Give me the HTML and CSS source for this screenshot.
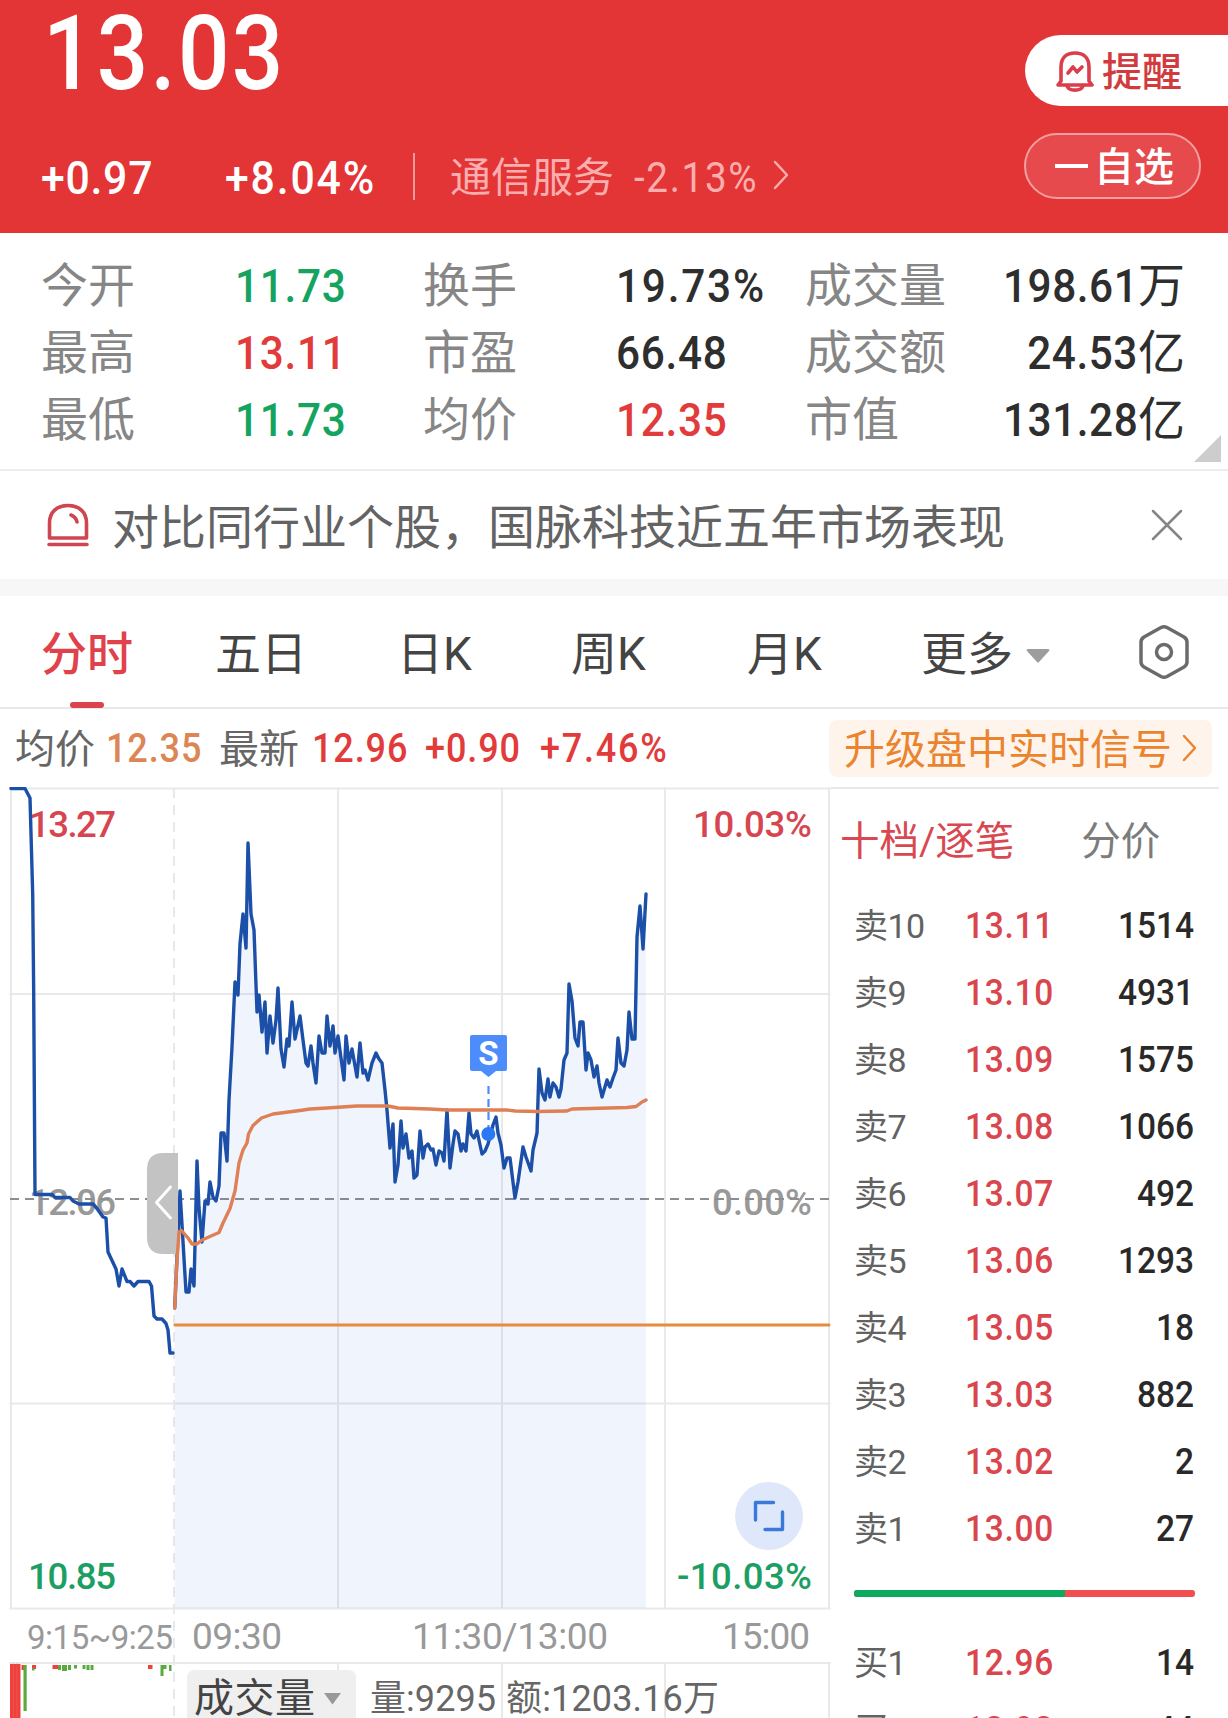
FILE: index.html
```html
<!DOCTYPE html>
<html lang="zh-CN">
<head>
  <meta charset="UTF-8">
  <meta name="viewport" content="width=device-width, initial-scale=1.0">
  <title>国脉科技</title>
  <link rel="stylesheet" href="styles.css">
</head>
<body>
  <header class="header">
    <div class="quote">
      <div class="price">13.03</div>
      <div class="change-row">
        <span class="change">+0.97</span>
        <span class="change percent">+8.04%</span>
        <span class="divider"></span>
        <span class="sector">通信服务</span>
        <span class="sector-change">-2.13%</span>
        <svg class="sector-arrow" width="17" height="30" viewBox="0 0 17 30"><path d="M2 2 L14 15 L2 28"/></svg>
      </div>
    </div>
    <div class="actions">
      <button class="btn remind">
        <svg width="38" height="42" viewBox="0 0 38 42">
          <path d="M5 31 V17 C5 7 11 3 19 3 C27 3 33 7 33 17 V31 L36 35 H2 L5 31"/>
          <path d="M11 36 C13 41.500 25 41.500 27 36"/>
          <path d="M12 23 L17 17 L21 22 L26 17"/>
        </svg>
        <span>提醒</span>
      </button>
      <button class="btn watch"><i class="minus"></i><span>自选</span></button>
    </div>
  </header>

  <section class="stats">
    <span class="label">今开</span><span class="num green">11.73</span>
    <span class="label">换手</span><span class="num wide">19.73%</span>
    <span class="label">成交量</span><span class="right"><b>198.61</b>万</span>
    <span class="label">最高</span><span class="num red">13.11</span>
    <span class="label">市盈</span><span class="num">66.48</span>
    <span class="label">成交额</span><span class="right"><b>24.53</b>亿</span>
    <span class="label">最低</span><span class="num green">11.73</span>
    <span class="label">均价</span><span class="num red">12.35</span>
    <span class="label">市值</span><span class="right"><b>131.28</b>亿</span>
    <i class="corner"></i>
  </section>

  <section class="notice">
    <svg width="42" height="44" viewBox="0 0 42 44">
      <path d="M2.500 35 V20 C2.500 9 10 2.500 21 2.500 C32 2.500 39.500 9 39.500 20 V35 Z M2 41.500 H40 M24 12 Q29 14 30 19"/>
    </svg>
    <span class="notice-text">对比同行业个股，国脉科技近五年市场表现</span>
    <svg class="close" width="32" height="32" viewBox="0 0 32 32"><path d="M2 2 L30 30 M30 2 L2 30"/></svg>
  </section>

  <nav class="tabs">
    <span class="tab active">分时</span>
    <span class="tab">五日</span>
    <span class="tab">日K</span>
    <span class="tab">周K</span>
    <span class="tab">月K</span>
    <span class="tab more">更多
      <svg width="24" height="16" viewBox="0 0 24 16"><path d="M2 1 H22 Q24 1 23 3 L13 14 Q12 15 11 14 L1 3 Q0 1 2 1Z"/></svg>
    </span>
    <svg class="settings" width="52" height="56" viewBox="0 0 52 56">
      <path d="M23 3.500 Q26 2 29 3.500 L46 13 Q49 15 49 18 V38 Q49 41 46 43 L29 52.500 Q26 54 23 52.500 L6 43 Q3 41 3 38 V18 Q3 15 6 13 Z"/>
      <circle cx="26" cy="28" r="7.500"/>
    </svg>
  </nav>

  <div class="info">
    <span class="info-label">均价</span>
    <span class="info-num orange avg">12.35</span>
    <span class="info-label">最新</span>
    <span class="info-num red last">12.96</span>
    <span class="info-num red diff">+0.90</span>
    <span class="info-num red rate">+7.46%</span>
    <a class="upgrade"><span>升级盘中实时信号</span>
      <svg width="16" height="28" viewBox="0 0 16 28"><path d="M2 2 L13 14 L2 26"/></svg>
    </a>
  </div>

  <main class="main">
    <svg class="chart" width="831" height="931" viewBox="0 787 831 931">
      <!-- grid -->
      <g class="grid">
        <path d="M11 788 V1608 M338 788 V1608 M502 788 V1608 M665 788 V1608 M829 788 V1608"/>
        <path d="M10 788.500 H831 M10 994 H830 M10 1403.500 H830 M10 1608.500 H830 M10 1663 H830"/>
        <path d="M338 1663 V1718 M502 1663 V1718 M665 1663 V1718 M829 1663 V1718"/>
        <path class="dash" d="M174 788 V1718"/>
      </g>

      <g class="scale">
        <text class="up" x="29" y="837" textLength="87">13.27</text>
        <text class="up" x="693" y="837" textLength="119">10.03%</text>
        <text class="flat" x="29" y="1215" textLength="87">12.06</text>
        <text class="flat" x="712" y="1215" textLength="100">0.00%</text>
        <text class="down" x="28" y="1589" textLength="88">10.85</text>
        <text class="down" x="677" y="1589" textLength="135">-10.03%</text>
      </g>

      <path class="zero" d="M10 1199 H830"/>

      <path class="area" d="M174.700 1308 L180 1191 186 1292 189 1292 191 1269 194 1286 197 1161 199 1208 202 1242 205 1201 208 1204 210 1182 213 1197 216 1201 219 1186 221 1133 224 1133 227 1161 229 1100 232 1047 235 982 238 995 240 944 243 914 246 948 248 843 251 914 254 930 257 1012 259 995 262 1032 265 1002 267 1053 270 1016 273 1043 276 1020 278 988 281 1049 284 1067 287 1039 289 1046 292 1002 295 1039 300 1016 303 1040 306 1063 308 1066 311 1046 313 1063 316 1083 319 1036 322 1053 325 1053 327 1016 330 1046 333 1026 335 1053 338 1036 344 1080 346 1036 349 1063 352 1049 357 1077 360 1043 363 1073 365 1070 368 1080 372 1063 376 1053 379 1059 382 1063 385 1090 387 1110 390 1148 393 1124 395 1182 398 1165 401 1121 403 1148 406 1134 409 1158 412 1151 414 1178 417 1175 420 1131 423 1158 425 1147 428 1144 431 1150 433 1149 436 1165 439 1151 442 1153 444 1161 447 1110 450 1168 453 1144 455 1131 458 1134 461 1151 463 1144 466 1151 469 1113 471 1134 474 1138 477 1131 482 1154 485 1151 488 1144 493 1125 496 1117 498 1133 501 1145 504 1168 507 1158 510 1158 515 1198 518 1182 523 1147 526 1157 531 1171 533 1150 537 1133 538 1100 539 1069 542 1093 545 1100 548 1079 550 1097 553 1083 556 1087 559 1097 561 1089 564 1060 567 1053 569 984 572 1001 575 1038 578 1046 580 1022 583 1022 586 1070 588 1053 591 1060 594 1077 597 1066 599 1083 602 1097 607 1080 610 1087 613 1078 616 1070 618 1038 621 1063 624 1066 627 1050 629 1012 632 1039 635 1039 637 937 640 906 643 949 646 893 V1608 H174.700 Z"/>

      <!-- call auction 9:15 - 9:25 -->
      <polyline class="line" points="11,788.500 25,788.500 30,798 32.700,894 33.700,994 35,1194.500 52,1194.500 55,1197.500 70,1197.500 73,1201 79,1204 93,1204 97,1208.500 103,1217 106,1218 108,1252 116,1269 119,1286 122,1269 127,1281.500 130,1281.500 134,1286 138,1281.500 149,1281.500 151.500,1286 154,1316 157,1319 162,1319 166,1323.500 168,1330 170,1353 173,1353"/>
      <polyline class="line" points="174.700,1308 180,1191 186,1292 189,1292 191,1269 194,1286 197,1161 199,1208 202,1242 205,1201 208,1204 210,1182 213,1197 216,1201 219,1186 221,1133 224,1133 227,1161 229,1100 232,1047 235,982 238,995 240,944 243,914 246,948 248,843 251,914 254,930 257,1012 259,995 262,1032 265,1002 267,1053 270,1016 273,1043 276,1020 278,988 281,1049 284,1067 287,1039 289,1046 292,1002 295,1039 300,1016 303,1040 306,1063 308,1066 311,1046 313,1063 316,1083 319,1036 322,1053 325,1053 327,1016 330,1046 333,1026 335,1053 338,1036 344,1080 346,1036 349,1063 352,1049 357,1077 360,1043 363,1073 365,1070 368,1080 372,1063 376,1053 379,1059 382,1063 385,1090 387,1110 390,1148 393,1124 395,1182 398,1165 401,1121 403,1148 406,1134 409,1158 412,1151 414,1178 417,1175 420,1131 423,1158 425,1147 428,1144 431,1150 433,1149 436,1165 439,1151 442,1153 444,1161 447,1110 450,1168 453,1144 455,1131 458,1134 461,1151 463,1144 466,1151 469,1113 471,1134 474,1138 477,1131 482,1154 485,1151 488,1144 493,1125 496,1117 498,1133 501,1145 504,1168 507,1158 510,1158 515,1198 518,1182 523,1147 526,1157 531,1171 533,1150 537,1133 538,1100 539,1069 542,1093 545,1100 548,1079 550,1097 553,1083 556,1087 559,1097 561,1089 564,1060 567,1053 569,984 572,1001 575,1038 578,1046 580,1022 583,1022 586,1070 588,1053 591,1060 594,1077 597,1066 599,1083 602,1097 607,1080 610,1087 613,1078 616,1070 618,1038 621,1063 624,1066 627,1050 629,1012 632,1039 635,1039 637,937 640,906 643,949 646,894"/>

      <!-- drawer handle -->
      <path class="handle" d="M178 1153 H163 Q147 1153 147 1170 V1237 Q147 1254 163 1254 H178 Z"/>
      <path class="handle-arrow" d="M170.500 1187 L156.500 1202.500 L170.500 1218"/>

      <polyline class="avg-line" points="174.700,1308 177,1260 179,1232 181.500,1230.500 188,1238 192,1244 197,1244 202,1240 219,1232.500 223,1223 230,1208.500 235,1191 239,1163 243,1150 247,1143 248.500,1134 253,1125.500 261.500,1118 273,1114 300,1110.500 310,1109 327,1108 357,1106 388,1106 398,1108 430,1109 447,1110 507,1110 515,1111 537,1111.500 567,1111 572,1109 627,1107.500 636,1106.500 642,1102 646,1100"/>
      <path class="cost-line" d="M175 1325 H829"/>

      <!-- sell marker -->
      <path class="marker-dash" d="M488.500 1086 V1128"/>
      <circle class="marker-dot" cx="488.300" cy="1134" r="7"/>
      <path class="marker-box" d="M472 1035 H505 Q507 1035 507 1037 V1069 Q507 1071 505 1071 H496 L488.500 1077 L481 1071 H472 Q470 1071 470 1069 V1037 Q470 1035 472 1035Z"/>
      <text class="marker-text" x="488.500" y="1064.500">S</text>

      <circle class="full-bg" cx="769" cy="1516" r="34"/>
      <path class="full-icon" d="M755.500 1520 V1502.500 H773.500 M782.500 1512 V1529.500 H765"/>

      <g class="times">
        <text class="small" x="27" y="1649" textLength="146">9:15~9:25</text>
        <text x="192" y="1649" textLength="90">09:30</text>
        <text x="412" y="1649" textLength="196">11:30/13:00</text>
        <text x="722" y="1649" textLength="88">15:00</text>
      </g>

      <!-- volume bars -->
      <path class="vol-red" d="M10 1664 H20.500 V1718 H10Z M21.500 1665 h2.500 v5 h-2.500z M32 1665 h4 v4 h-4z M52.500 1665 h5.500 v4 h-5.500z M148 1665 h4.500 v4 h-4.500z"/>
      <path class="vol-gap" d="M13.300 1664 V1718 M17 1664 V1718"/>
      <path class="vol-green" d="M23.500 1665 h3.200 v46 h-3.200z M32 1668 h2.500 v2.500 h-2.500z M58 1665 h3 v5 h-3z M62 1665 h5 v6 h-5z M68 1665 h3 v5 h-3z M74 1665 h3 v3.500 h-3z M82.500 1665 h3 v4 h-3z M86.500 1665 h3 v5 h-3z M90.500 1665 h3 v5 h-3z M160.500 1665 h3 v11 h-3z M163.500 1665 h3 v4 h-3z M169 1665 h2.500 v6 h-2.500z"/>

      <path class="select-box" d="M187 1718 V1678 Q187 1670 195 1670 H348 Q356 1670 356 1678 V1718Z"/>
      <text class="select-text" x="194" y="1712" textLength="121">成交量</text>
      <path class="select-arrow" d="M324 1693 H341 L332.500 1704.500Z"/>
      <text class="vol-text" x="370" y="1711" textLength="126">量:9295</text>
      <text class="vol-text" x="506" y="1711" textLength="213">额:1203.16万</text>
    </svg>

    <aside class="book">
      <div class="book-tabs"><span class="book-active">十档/逐笔</span><span>分价</span></div>
      <div class="row"><span>卖10</span><b>13.11</b><em>1514</em></div>
      <div class="row"><span>卖9</span><b>13.10</b><em>4931</em></div>
      <div class="row"><span>卖8</span><b>13.09</b><em>1575</em></div>
      <div class="row"><span>卖7</span><b>13.08</b><em>1066</em></div>
      <div class="row"><span>卖6</span><b>13.07</b><em>492</em></div>
      <div class="row"><span>卖5</span><b>13.06</b><em>1293</em></div>
      <div class="row"><span>卖4</span><b>13.05</b><em>18</em></div>
      <div class="row"><span>卖3</span><b>13.03</b><em>882</em></div>
      <div class="row"><span>卖2</span><b>13.02</b><em>2</em></div>
      <div class="row"><span>卖1</span><b>13.00</b><em>27</em></div>
      <div class="ratio"><i style="width: 62%"></i></div>
      <div class="row"><span>买1</span><b>12.96</b><em>14</em></div>
      <div class="row"><span>买2</span><b>12.93</b><em>44</em></div>
    </aside>
  </main>
</body>
</html>
```
FILE: styles.css
```css
* {
  box-sizing: border-box;
}

body {
  margin: 0;
  width: 1228px;
  height: 1718px;
  overflow: hidden;
  background-color: #fff;
  font-family: Roboto, "Noto Sans CJK SC", sans-serif;
  color: #2e2e2e;
}

svg {
  flex: none;
  fill: none;
  stroke-linecap: round;
  stroke-linejoin: round;
}

.red {
  color: #e23b3b;
}

.green {
  color: #14a45f;
}

.orange {
  color: #dc8555;
}

/* header */
.header {
  display: flex;
  justify-content: space-between;
  height: 233px;
  background-color: #e33436;
  color: #fff;
}

.price {
  padding: 2px 0 0 49px;
  height: 143px;
  font-size: 103px;
  font-weight: 500;
  line-height: 103px;
  letter-spacing: 2.5px;
  transform: scaleX(0.88);
  transform-origin: left;
}

.change-row {
  display: flex;
  align-items: center;
  height: 66px;
  padding-left: 41px;
  white-space: nowrap;
}

.change {
  width: 184px;
  padding-top: 2px;
  font-size: 47px;
  font-weight: 500;
  letter-spacing: 0.8px;
  transform: scaleX(0.91);
  transform-origin: left;
}

.percent {
  letter-spacing: 2px;
}

.divider {
  width: 2px;
  height: 47px;
  margin-left: 4px;
  background-color: #f09a9b;
}

.sector {
  margin-left: 35px;
  padding-bottom: 4px;
  width: 184px;
  font-size: 41px;
  color: #fbaeae;
}

.sector-change {
  width: 139px;
  padding-top: 2px;
  font-size: 42px;
  letter-spacing: 1.8px;
  transform: scaleX(0.92);
  transform-origin: left;
  color: #fbaeae;
}

.sector-arrow {
  margin-bottom: 2px;
  stroke: #fbaeae;
  stroke-width: 2.5;
}

.actions {
  display: flex;
  flex-direction: column;
  gap: 27px;
  width: 203px;
  padding-top: 35px;
}

.btn {
  display: flex;
  align-items: center;
  border: none;
  font-family: inherit;
  font-weight: 500;
  font-size: 40px;
}

.btn span {
  padding-bottom: 4px;
}

.remind {
  height: 71px;
  padding: 0 0 0 31px;
  gap: 8px;
  border-radius: 36px 0 0 36px;
  background-color: #fff;
  color: #d23b3e;
}

.remind svg {
  stroke: #d93e4a;
  stroke-width: 3.6;
}

.watch {
  width: 177px;
  height: 66px;
  margin-left: -1px;
  padding: 0 0 0 29px;
  gap: 6px;
  border: 2px solid #f4a0a1;
  border-radius: 33px;
  background-color: #e64a4c;
  color: #fff;
}

.minus {
  width: 33px;
  height: 4px;
  background-color: #fff;
}

/* stats */
.stats {
  position: relative;
  display: grid;
  grid-template-columns: 194px 188px 193px 189px 130px 250px;
  grid-auto-rows: 67px;
  align-items: center;
  height: 238px;
  padding: 19px 0 0 41px;
  border-bottom: 2px solid #ededed;
  font-size: 47px;
  line-height: 67px;
  white-space: nowrap;
}

.label {
  color: #868686;
}

.num {
  font-weight: 500;
  letter-spacing: 0.8px;
  transform: scaleX(0.9);
  transform-origin: left;
}

.wide {
  letter-spacing: 2px;
}

.right {
  text-align: right;
}

.right b {
  display: inline-block;
  font-weight: 500;
  letter-spacing: 0.6px;
  transform: scaleX(0.9);
  transform-origin: right;
}

.corner {
  position: absolute;
  right: 7px;
  bottom: 7px;
  border-left: 27px solid transparent;
  border-bottom: 27px solid #cdcdcd;
}

/* notice */
.notice {
  display: flex;
  align-items: center;
  height: 108px;
  padding-left: 47px;
  font-size: 47px;
  color: #636363;
}

.notice svg {
  stroke: #cf4650;
  stroke-width: 3.6;
}

.notice-text {
  width: 1039px;
  margin-left: 23px;
  padding-bottom: 4px;
}

.notice .close {
  stroke: #858585;
  stroke-width: 2.5;
}

/* tabs */
.tabs {
  display: grid;
  grid-template-columns: 174px 182px 174px 176px 174px 217px 52px;
  align-items: center;
  height: 130px;
  padding: 0 0 0 41px;
  border-top: 17px solid #f7f7f7;
  border-bottom: 2px solid #e9e9e9;
  font-size: 46px;
  color: #444;
  white-space: nowrap;
}

.tab {
  padding-bottom: 4px;
}

.active {
  position: relative;
  color: #e0424b;
  font-weight: 500;
}

.active::after {
  content: "";
  position: absolute;
  left: 29px;
  bottom: -21px;
  width: 34px;
  height: 6px;
  border-radius: 3px;
  background-color: #db434d;
}

.more svg {
  margin-left: 2px;
  vertical-align: 6px;
  fill: #9d9d9d;
}

.settings {
  stroke: #6b6b6b;
  stroke-width: 3.5;
}

/* info bar */
.info {
  display: flex;
  align-items: center;
  height: 78px;
  padding-left: 15px;
  font-size: 40px;
  white-space: nowrap;
}

.info-label {
  width: 93px;
  padding-bottom: 4px;
  color: #666;
}

.info-num {
  font-weight: 500;
  letter-spacing: 1px;
  transform: scaleX(0.9);
  transform-origin: left;
}

.avg {
  width: 111px;
  margin-left: -2px;
  margin-right: 2px;
}

.last {
  width: 113px;
}

.diff {
  width: 115px;
}

.rate {
  width: 289px;
  letter-spacing: 2px;
}

.upgrade {
  display: flex;
  align-items: center;
  justify-content: space-between;
  width: 383px;
  height: 57px;
  padding: 0 14px 0 15px;
  border-radius: 8px;
  background-color: #fff4ec;
  color: #ea842f;
  font-size: 41px;
}

.upgrade span {
  padding-bottom: 4px;
}

.upgrade svg {
  stroke: #ea842f;
  stroke-width: 2.5;
}

/* chart */
.main {
  display: flex;
}

.grid {
  stroke: #e9e9e9;
  stroke-width: 2;
}

.dash {
  stroke-dasharray: 10 7;
  stroke-linecap: butt;
}

.area {
  fill: rgba(60, 120, 230, 0.08);
}

.line {
  stroke: #1c50a8;
  stroke-width: 3.4;
}

.avg-line {
  stroke: #df7f56;
  stroke-width: 3.4;
}

.cost-line {
  stroke: #e88b3c;
  stroke-width: 3;
}

.zero {
  stroke: #8d8d92;
  stroke-width: 2;
  stroke-dasharray: 9 6;
  stroke-linecap: butt;
}

.scale text {
  font-size: 36.5px;
  font-weight: 500;
}

.up {
  fill: #d64550;
}

.flat {
  fill: #999;
}

.down {
  fill: #1d9e62;
}

.handle {
  fill: #c3c3c3;
}

.handle-arrow {
  stroke: #fff;
  stroke-width: 3;
}

.marker-box {
  fill: #4c8cfb;
}

.marker-text {
  fill: #fff;
  font-size: 33px;
  font-weight: 700;
  text-anchor: middle;
}

.marker-dot {
  fill: #2a78f4;
}

.marker-dash {
  stroke: #4c8cfb;
  stroke-width: 2.2;
  stroke-dasharray: 8 5;
  stroke-linecap: butt;
}

.full-bg {
  fill: #dfe8fb;
}

.full-icon {
  stroke: #3b78dc;
  stroke-width: 3.4;
}

.times text {
  fill: #999;
  font-size: 37px;
}

.times .small {
  font-size: 33px;
}

.vol-red {
  fill: #f23f3b;
}

.vol-gap {
  stroke: #e0605c;
  stroke-width: 0.8;
}

.vol-green {
  fill: #5aab3e;
}

.select-box {
  fill: #efefef;
}

.select-text {
  fill: #444;
  font-size: 40px;
}

.select-arrow {
  fill: #999;
}

.vol-text {
  fill: #666;
  font-size: 36px;
}

/* order book */
.book {
  width: 388px;
  border-top: 2px solid #e9e9e9;
}

.book-tabs {
  display: flex;
  gap: 67px;
  align-items: center;
  height: 103px;
  padding: 0 0 6px 9px;
  font-size: 39.5px;
  color: #7c7c7c;
}

.book-active {
  color: #d94850;
}

.row {
  display: grid;
  grid-template-columns: 111px 100px 129px;
  align-items: center;
  height: 67px;
  padding-left: 23px;
  font-size: 36px;
}

.row span {
  padding-bottom: 5px;
  font-size: 34px;
  letter-spacing: -0.5px;
  color: #626262;
}

.row b {
  font-weight: 500;
  letter-spacing: 0.8px;
  transform: scaleX(0.93);
  transform-origin: left;
  color: #d9464e;
}

.row em {
  font-style: normal;
  font-weight: 500;
  text-align: right;
  transform: scaleX(0.93);
  transform-origin: right;
  color: #292929;
}

.ratio {
  height: 7px;
  margin: 28px 24px 32px 23px;
  border-radius: 3px;
  overflow: hidden;
  background-color: #f04e50;
}

.ratio i {
  display: block;
  height: 7px;
  background-color: #0caa5e;
}
```
